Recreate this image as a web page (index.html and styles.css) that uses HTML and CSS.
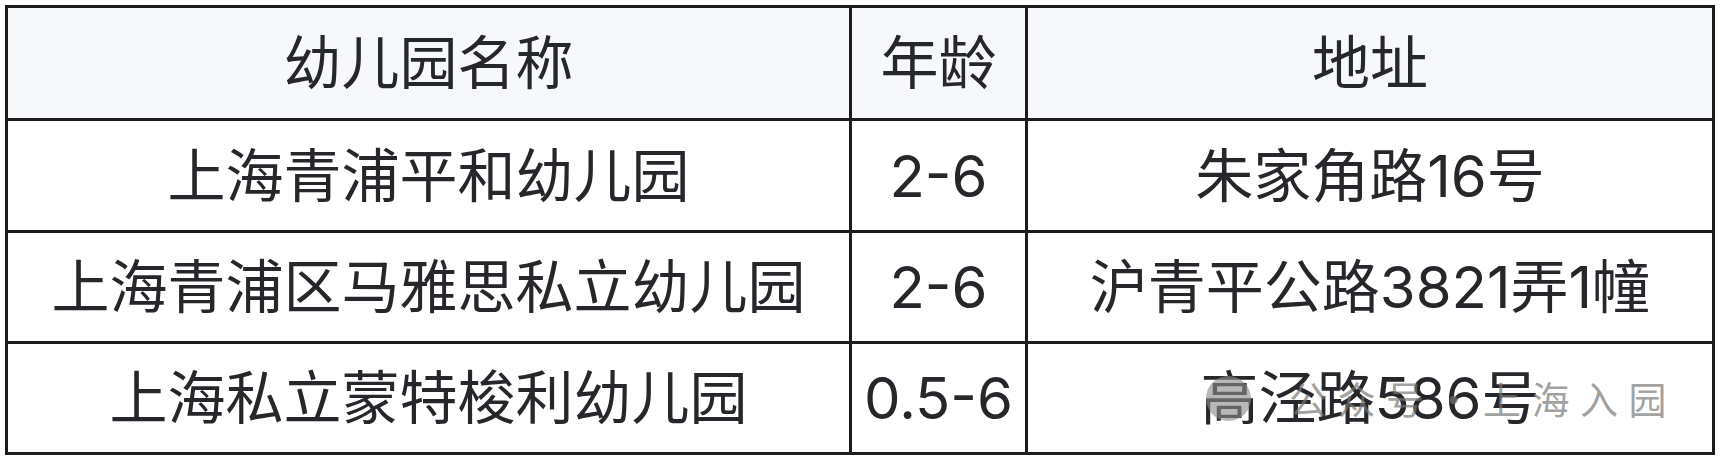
FILE: index.html
```html
<!DOCTYPE html>
<html lang="zh-CN">
<head>
<meta charset="utf-8">
<title>幼儿园列表</title>
<link rel="stylesheet" href="styles.css">
</head>
<body>
<div class="page">
  <div class="grid-table" role="table">
    <div class="cell head" role="columnheader">幼儿园名称</div>
    <div class="cell head" role="columnheader">年龄</div>
    <div class="cell head" role="columnheader">地址</div>

    <div class="cell" role="cell">上海青浦平和幼儿园</div>
    <div class="cell" role="cell">2-6</div>
    <div class="cell" role="cell">朱家角路16号</div>

    <div class="cell" role="cell">上海青浦区马雅思私立幼儿园</div>
    <div class="cell" role="cell">2-6</div>
    <div class="cell" role="cell">沪青平公路3821弄1幢</div>

    <div class="cell" role="cell">上海私立蒙特梭利幼儿园</div>
    <div class="cell" role="cell">0.5-6</div>
    <div class="cell" role="cell">高泾路586号</div>

    <div class="watermark">
      <span class="wm-icon"></span>
      <span class="wm-text">公众号・上海入园</span>
    </div>
  </div>
</div>
</body>
</html>
```
FILE: styles.css
```css
html, body {
  margin: 0;
  padding: 0;
  background: #ffffff;
}

.page {
  padding: 5px;
}

.grid-table {
  position: relative;
  display: grid;
  grid-template-columns: 844px 176px 687px;
  grid-template-rows: 113px 112px 111px 111px;
  width: 1707px;
  border-top: 3px solid #1c1c1e;
  border-left: 3px solid #1c1c1e;
  font-family: Inter, "Noto Sans CJK SC", sans-serif;
  font-size: 58px;
  font-weight: 400;
  color: #26272b;
}

.cell {
  box-sizing: border-box;
  display: flex;
  align-items: center;
  justify-content: center;
  border-right: 3px solid #1c1c1e;
  border-bottom: 3px solid #1c1c1e;
  background: #ffffff;
  white-space: nowrap;
  line-height: 1;
}

.cell.head {
  background: #f7f8fa;
}

.watermark {
  position: absolute;
  left: 1198px;
  top: 367px;
  height: 46px;
  display: flex;
  align-items: center;
  pointer-events: none;
}

.wm-icon {
  width: 45px;
  height: 45px;
  border-radius: 50%;
  background: rgba(140, 140, 140, 0.62);
  flex: none;
}

.wm-text {
  margin-left: 38px;
  font-family: "Noto Sans CJK SC", sans-serif;
  font-size: 38px;
  letter-spacing: 10.5px;
  color: rgba(120, 120, 120, 0.7);
  line-height: 1;
  white-space: nowrap;
}
```
